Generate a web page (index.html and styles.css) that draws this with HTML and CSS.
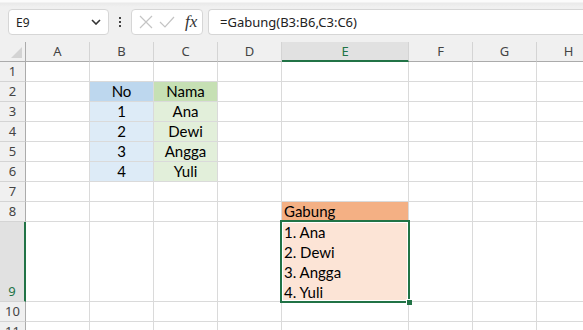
FILE: index.html
```html
<!DOCTYPE html>
<html lang="en">
<head>
    <meta charset="UTF-8">
    <title>Gabung</title>
    <link rel="stylesheet" href="styles.css">
</head>
<body>
<div class="bar">
    <div class="namebox">
        <span>E9</span>
        <svg width="10" height="6" viewBox="0 0 10 6"><path d="M1 1 L5 5 L9 1" fill="none" stroke="#333" stroke-width="1.6"/></svg>
    </div>
    <div class="dots"><i></i><i></i><i></i></div>
    <div class="fxbox">
        <svg width="14" height="14" viewBox="0 0 14 14"><path d="M1 1 L13 13 M13 1 L1 13" stroke="#c4c4c4" stroke-width="1.2"/></svg>
        <svg width="16" height="12" viewBox="0 0 16 12"><path d="M1 6 L6 11 L15 1" fill="none" stroke="#c4c4c4" stroke-width="1.2"/></svg>
        <span class="fx">fx</span>
    </div>
    <div class="formula">=Gabung(B3:B6,C3:C6)</div>
</div>

<div class="sheet">
    <div class="hd corner"><b></b></div>
    <div class="hd">A</div>
    <div class="hd">B</div>
    <div class="hd">C</div>
    <div class="hd">D</div>
    <div class="hd sel">E</div>
    <div class="hd">F</div>
    <div class="hd">G</div>
    <div class="hd">H</div>

    <div class="rh">1</div><div></div><div></div><div></div><div></div><div></div><div></div><div></div><div></div>
    <div class="rh">2</div><div></div><div class="c no-h">No</div><div class="c nama-h">Nama</div><div></div><div></div><div></div><div></div><div></div>
    <div class="rh">3</div><div></div><div class="c no">1</div><div class="c nama">Ana</div><div></div><div></div><div></div><div></div><div></div>
    <div class="rh">4</div><div></div><div class="c no">2</div><div class="c nama">Dewi</div><div></div><div></div><div></div><div></div><div></div>
    <div class="rh">5</div><div></div><div class="c no">3</div><div class="c nama">Angga</div><div></div><div></div><div></div><div></div><div></div>
    <div class="rh">6</div><div></div><div class="c no">4</div><div class="c nama">Yuli</div><div></div><div></div><div></div><div></div><div></div>
    <div class="rh">7</div><div></div><div></div><div></div><div></div><div></div><div></div><div></div><div></div>
    <div class="rh">8</div><div></div><div></div><div></div><div></div><div class="l gab-h">Gabung</div><div></div><div></div><div></div>
    <div class="rh sel">9</div><div></div><div></div><div></div><div></div>
    <div class="l gab active">1. Ana<br>2. Dewi<br>3. Angga<br>4. Yuli</div><div></div><div></div><div></div>
    <div class="rh">10</div><div></div><div></div><div></div><div></div><div></div><div></div><div></div><div></div>
    <div class="rh">11</div><div></div><div></div><div></div><div></div><div></div><div></div><div></div><div></div>
</div>
</body>
</html>
```

FILE: styles.css
```css
body {
    margin: 0;
    width: 583px;
    height: 330px;
    overflow: hidden;
    background: #fff;
    font-family: "Noto Sans", sans-serif;
}

.bar {
    height: 42px;
    box-sizing: border-box;
    padding: 9px 0 0 8px;
    display: flex;
    align-items: flex-start;
    background: linear-gradient(#fbfbfb 0, #fbfbfb 2px, #e9e9e9 3px, #f0f0f0 7px);
}

.namebox {
    width: 101px;
    height: 26px;
    box-sizing: border-box;
    background: #fff;
    border: 1px solid #d6d6d6;
    border-radius: 4px;
    display: flex;
    align-items: center;
    justify-content: space-between;
    padding: 0 7px 0 7px;
    font-size: 12px;
    color: #222;
}

.dots {
    width: 22px;
    height: 26px;
    display: flex;
    flex-direction: column;
    align-items: center;
    justify-content: center;
    gap: 2px;
}

.dots i {
    width: 2px;
    height: 2px;
    background: #444;
}

.fxbox {
    width: 72px;
    height: 26px;
    box-sizing: border-box;
    background: #fff;
    border: 1px solid #d6d6d6;
    border-radius: 4px;
    display: flex;
    align-items: center;
    padding: 0 0 0 7px;
    gap: 6px;
}

.fx {
    font-family: "Liberation Serif", serif;
    font-style: italic;
    font-size: 17px;
    color: #333;
    margin-left: 4px;
}

.formula {
    flex: 1;
    margin-left: 5px;
    height: 26px;
    box-sizing: border-box;
    background: #fff;
    border: 1px solid #d6d6d6;
    border-right: 0;
    border-radius: 4px 0 0 4px;
    padding: 0 0 0 11px;
    font-size: 13px;
    line-height: 24px;
    color: #222;
}

.sheet {
    display: grid;
    grid-template-columns: 26px 64px 64px 64px 64px 127px 64px 64px 64px;
    grid-template-rows: 20px repeat(8, 20px) 80px 20px 20px;
    font-family: Lato, "Noto Sans", sans-serif;
    font-size: 15px;
    color: #000;
}

.sheet > div {
    box-sizing: border-box;
    border-right: 1px solid #dadada;
    border-bottom: 1px solid #dadada;
    line-height: 19px;
    white-space: nowrap;
}

.sheet > .hd {
    background: #f0f0f0;
    border-right-color: #d4d4d4;
    border-bottom-color: #ababab;
    text-align: center;
    font-family: "Noto Sans", sans-serif;
    font-size: 13px;
    color: #444;
}

.sheet > .hd.sel {
    background: #e1e1e1;
    color: #217346;
    border-bottom: 2px solid #217346;
    line-height: 18px;
}

.sheet > .corner {
    position: relative;
    border-right-color: #ababab;
}

.corner b {
    position: absolute;
    right: 3px;
    bottom: 3px;
    border-left: 11px solid transparent;
    border-bottom: 11px solid #d3d3d3;
}

.sheet > .rh {
    background: #f0f0f0;
    border-right-color: #ababab;
    border-bottom-color: #d4d4d4;
    text-align: center;
    font-family: "Noto Sans", sans-serif;
    font-size: 13px;
    color: #444;
}

.sheet > .rh.sel {
    background: #e1e1e1;
    color: #217346;
    border-right: 2px solid #217346;
    display: flex;
    align-items: flex-end;
    justify-content: center;
}

.c {
    text-align: center;
}

.l {
    padding-left: 2px;
}

.no-h { background: #bdd7ee; }
.no { background: #ddebf7; }
.nama-h { background: #c6e0b4; }
.nama { background: #e2efda; }
.gab-h { background: #f4b084; }
.gab {
    background: #fce4d6;
    line-height: 20px !important;
}

.active {
    position: relative;
}

.active::after {
    content: "";
    position: absolute;
    top: -2px;
    left: -2px;
    right: -2px;
    bottom: -2px;
    border: 2px solid #217346;
    box-shadow: inset 0 0 0 1px #fff;
}

.active::before {
    content: "";
    position: absolute;
    right: -4px;
    bottom: -4px;
    width: 5px;
    height: 5px;
    background: #217346;
    border-left: 1px solid #fff;
    border-top: 1px solid #fff;
    z-index: 1;
}
```
